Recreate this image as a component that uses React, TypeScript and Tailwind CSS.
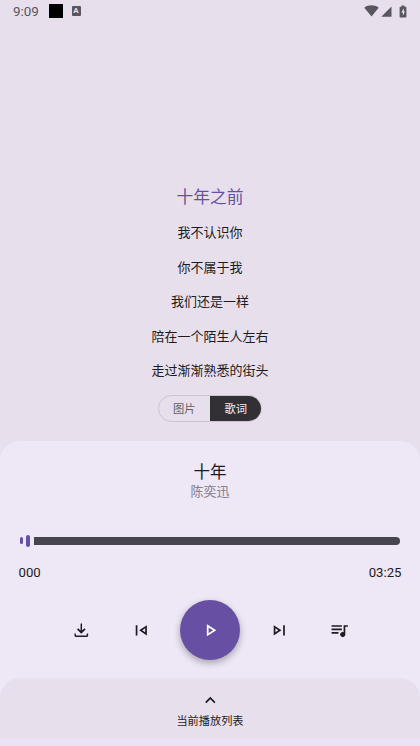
const lyrics = [
  "我不认识你",
  "你不属于我",
  "我们还是一样",
  "陪在一个陌生人左右",
  "走过渐渐熟悉的街头"
];

const icons = {
  download:
    "M12 16l-5-5 1.4-1.45 2.75 2.75V4h1.7v8.3l2.75-2.75L17 11l-5 5ZM6 19.8q-.825 0-1.4125-.5875T4 17.8v-2h1.7v2.3h12.6v-2.3H20v2q0 .825-.5875 1.4125T18 19.8H6Z",
  previous:
    "M5.5 18V6h2v12h-2Zm13 0l-9-6 9-6v12Zm-2-3.75v-4.5L13.1 12l3.4 2.25Z",
  play: "M8 19V5l11 7-11 7Zm2-3.65L15.25 12 10 8.65v6.7Z",
  next: "M16.5 18V6h2v12h-2Zm-11 0V6l9 6-9 6Zm2-3.75L10.9 12 7.5 9.75v4.5Z",
  queue:
    "M15 6H3v2h12V6Zm0 4H3v2h12v-2ZM3 16h8v-2H3v2ZM17 6v8.18c-.31-.11-.65-.18-1-.18-1.66 0-3 1.34-3 3s1.34 3 3 3 3-1.34 3-3V8h3V6h-5Z",
  expand: "M12 10.8l-4.6 4.6L6 14l6-6 6 6-1.4 1.4-4.6-4.6Z"
};

function Icon({ name }: { name: keyof typeof icons }) {
  return (
    <svg viewBox="0 0 24 24" fill="currentColor" className="size-[20.6px] shrink-0" aria-hidden>
      <path d={icons[name]} />
    </svg>
  );
}

function IconButton({ name, label }: { name: keyof typeof icons; label: string }) {
  return (
    <button aria-label={label} className="flex size-[41px] items-center justify-center">
      <Icon name={name} />
    </button>
  );
}

function StatusBar() {
  return (
    <header className="flex h-[22px] shrink-0 items-center pr-[13px] pl-[13px] text-[#59565d]">
      <span className="w-[35.5px] pt-px text-[13.4px] leading-[22px]">9:09</span>
      <span className="size-3.5 bg-black" />
      <span className="ml-[9px] flex h-[10px] w-[9px] items-center justify-center rounded-[1px] bg-[#59565d] text-[8px] leading-none font-bold text-[#e7e0ec]">
        A
      </span>
      <svg viewBox="0 0 15 12" className="ml-auto h-3 w-[15px]" fill="currentColor" aria-hidden>
        <path d="M7.5 11.5L.3 2.7C4.4-.5 10.6-.5 14.7 2.7Z" />
      </svg>
      <svg viewBox="0 0 11 11" className="ml-[2px] size-[11px]" fill="currentColor" aria-hidden>
        <path d="M.3 10.8L10.5.4v10.4Z" />
      </svg>
      <svg viewBox="0 0 8 13" className="ml-[7px] h-[13px] w-2" aria-hidden>
        <path d="M2.5.5h3v1.2h1q.9 0 .9.9v9q0 .9-.9.9h-5q-.9 0-.9-.9v-9q0-.9.9-.9h1Z" fill="currentColor" />
        <path d="M4.8 3.2L2.3 7.6h1.5v3.2l2.2-4.4H4.8Z" fill="#e7e0ec" />
      </svg>
    </header>
  );
}

export default function App() {
  return (
    <div className="flex h-[746px] w-[420px] flex-col overflow-hidden bg-[#e7e0ec] font-[Roboto,'Noto_Sans_CJK_SC',sans-serif] text-[#1d1b20]">
      <StatusBar />

      <main className="flex h-[418.5px] shrink-0 flex-col items-center pt-[159px]">
        <p className="mb-[2px] h-[33px] text-[16.8px] leading-[33px] text-[#6750a4]">十年之前</p>
        {lyrics.map((line) => (
          <p key={line} className="h-[34.5px] shrink-0 text-[13px] leading-[34.5px]">
            {line}
          </p>
        ))}
        <div className="mt-[6.5px] flex h-[27px] w-[104px] shrink-0 overflow-hidden rounded-full border border-[#cbc4d0] text-[11.3px] leading-[27px]">
          <button className="w-[50.5px] text-[#625f67]">图片</button>
          <button className="-my-px -mr-px flex-1 bg-[#322f35] pt-px text-[#f5eff7]">歌词</button>
        </div>
      </main>

      <section className="flex flex-1 flex-col rounded-t-[20px] bg-[#eee7f6]">
        <div className="flex flex-col items-center pt-[22px]">
          <h1 className="h-[19px] text-[16.5px] leading-5">十年</h1>
          <h2 className="text-[13px] leading-5 text-[#85808b]">陈奕迅</h2>
        </div>

        <div className="mt-[33px] flex h-3 items-center pr-[20.5px] pl-5">
          <span className="h-[7px] w-[3px] rounded-full bg-[#6750a4]" />
          <span className="ml-[3px] h-3 w-[4px] rounded-full bg-[#6750a4]" />
          <span className="ml-[4px] h-2 flex-1 rounded-l-[1px] rounded-r-full bg-[#49454f]" />
        </div>

        <div className="mt-[16px] flex justify-between px-[18.5px] text-[13.2px] leading-5">
          <span>000</span>
          <span>03:25</span>
        </div>

        <div className="mt-[17.5px] flex h-[60px] items-center justify-center gap-[18.7px]">
          <IconButton name="download" label="下载" />
          <IconButton name="previous" label="上一首" />
          <button
            aria-label="播放"
            className="flex size-[60px] items-center justify-center rounded-full bg-[#6750a4] text-white shadow-[0_3px_7px_rgba(0,0,0,0.3)]"
          >
            <Icon name="play" />
          </button>
          <IconButton name="next" label="下一首" />
          <IconButton name="queue" label="队列" />
        </div>

        <footer className="mt-[18px] flex flex-1 flex-col items-center rounded-t-[20px] bg-[#e7e0ec] pt-3">
          <Icon name="expand" />
          <span className="pt-px text-[11.2px] leading-5">当前播放列表</span>
          <div className="mt-auto h-[7px] w-full shrink-0 bg-[#ebe3f3]" />
        </footer>
      </section>
    </div>
  );
}
